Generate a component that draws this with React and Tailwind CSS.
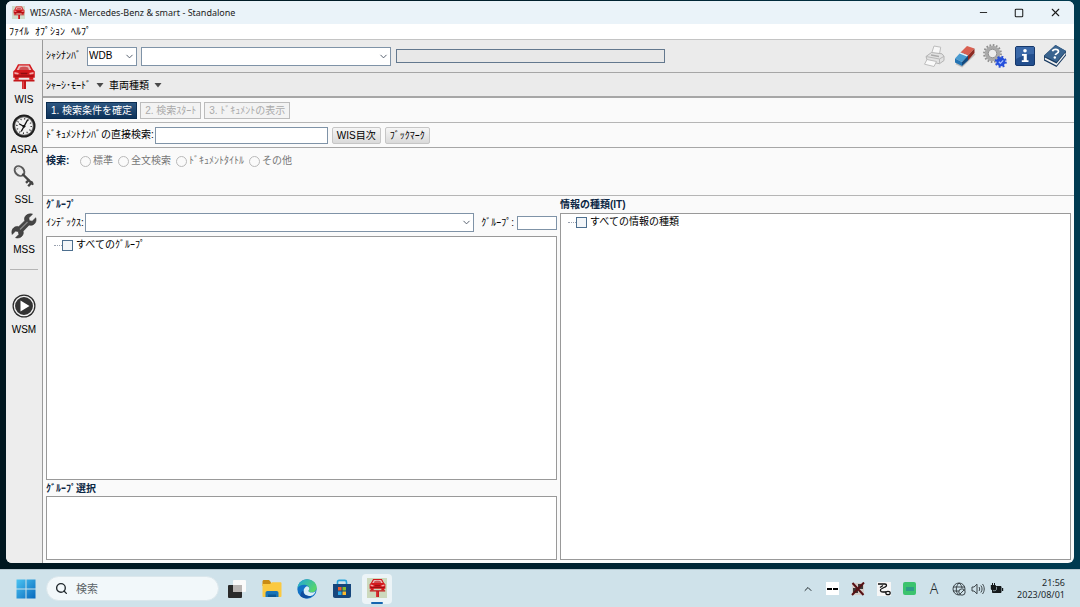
import React, { useState } from "react";
import { ChevronDown, ChevronUp, Search, Minus, Square, X } from "lucide-react";

const CarLiftIcon = ({ className }) => (
  <svg viewBox="0 0 24 26" className={className} aria-hidden="true">
    <path d="M6 1.200h12l3 5.600 1.800 1.700v6.300h-1.500v2h-4v-2H6.700v2h-4v-2H1.200V8.500L3 6.800z" fill="#d3191d" />
    <path d="M7 2.600h10l2.300 4.400H4.700z" fill="#e9b9b9" />
    <path d="M8 4.600c1.500-1 6.500-1 8 0l1 2.400H7z" fill="#d05053" />
    <path d="M2.500 9l4.300.9-.6 1.600-3.700-.4zM21.500 9l-4.300.9.6 1.600 3.700-.4z" fill="#f3a9a9" />
    <path d="M8.300 9.800h7.400l-.7 1.500H9zM2.500 12.600h19v1h-19z" fill="#8f0d10" />
    <path d="M1.500 16.800h21v1.800H14V26h-4v-7.400H1.500z" fill="#c4161a" />
    <path d="M10.600 18.600h1.200V26h-1.200z" fill="#e8585a" />
  </svg>
);

const ClockIcon = () => (
  <svg viewBox="0 0 24 24" className="size-6" aria-hidden="true">
    <circle cx="12" cy="12" r="11.500" fill="#1d1d1d" />
    <circle cx="12" cy="12" r="9.800" fill="#555" />
    <circle cx="12" cy="12" r="8.800" fill="#f1f1f1" />
    <circle cx="12" cy="12" r="7.200" fill="none" stroke="#333" strokeWidth="1.600" strokeDasharray="1 2.770" />
    <path d="M12 12.500L7.500 10M9.500 17L15.500 6" stroke="#111" strokeWidth="1.400" strokeLinecap="round" />
    <circle cx="12" cy="12.300" r="1.400" fill="#111" />
  </svg>
);

const KeyIcon = () => (
  <svg viewBox="0 0 24 24" className="size-6" aria-hidden="true">
    <ellipse cx="7.500" cy="7" rx="4.300" ry="5.400" transform="rotate(-45 7.500 7)" fill="none" stroke="#5a5a5a" strokeWidth="1.900" />
    <path d="M11 10.500l9.500 9.500" stroke="#444" strokeWidth="2.400" strokeLinecap="round" />
    <path d="M20.500 17.500l-4.300 4.700M17.300 15.500l-3.300 3.300" stroke="#444" strokeWidth="2.400" />
    <path d="M4.500 6c.5-1.500 1.600-2.200 3-2.200" stroke="#aaa" strokeWidth="0.800" fill="none" />
  </svg>
);

const WrenchIcon = () => (
  <svg viewBox="0 0 26 26" className="size-[26px]" aria-hidden="true">
    <path
      d="M21.500 1.200l-3.700 3.600.5 2.900 2.900.5 3.600-3.400c.8 3.200-.3 6-3 7.100-1.300.5-2.600.5-3.700.1l-6 6.200c.5 1.500.2 3.200-.9 4.600-1.600 2-4.200 2.600-6.600 1.900l3.300-3.300-.6-2.800-2.800-.6L1.200 21.400c-.8-2.600-.2-5.200 1.800-6.800 1.500-1.200 3.200-1.400 4.700-.9l6.100-6c-.5-1.300-.4-2.800.4-4.100 1.400-2.300 4.300-3.300 7.300-2.400z"
      fill="#454545"
      stroke="#2f2f2f"
      strokeWidth="0.600"
    />
    <path d="M9 16.500l7.500-7.500" stroke="#8a8a8a" strokeWidth="1.200" />
  </svg>
);

const PlayIcon = () => (
  <svg viewBox="0 0 24 24" className="size-6" aria-hidden="true">
    <circle cx="12" cy="12" r="11.500" fill="#2b2b2b" />
    <circle cx="12" cy="12" r="9.600" fill="#333" stroke="#f3f3f3" strokeWidth="1.300" />
    <path d="M8.500 6.500v11l9-5.500z" fill="#fff" />
  </svg>
);

const PrinterIcon = () => (
  <svg viewBox="0 0 24 24" className="size-6" aria-hidden="true">
    <path d="M8.500 9.500L11 2l6.700 1.200L16.500 10z" fill="#f7f7f7" stroke="#bdbdbd" />
    <path d="M3 12.500l5.500-4 10.500 1.300 2 2.500v4.200l-4.500 3.200-12-2.500z" fill="#e2e2e2" stroke="#b3b3b3" />
    <path d="M3 12.500l13.500 2.500 4.500-2.700M16.500 15v4.500" fill="none" stroke="#b8b8b8" />
    <path d="M4 15.500l9.500 2-2.500 5-9.500-2.300z" fill="#fafafa" stroke="#bdbdbd" />
    <path d="M8 11l8 1.500" stroke="#aaa" strokeWidth="1.300" />
  </svg>
);

const EraserIcon = () => (
  <svg viewBox="0 0 24 24" className="size-6" aria-hidden="true">
    <path d="M3 19.500l6 3L22 10" fill="none" stroke="#bbb" strokeWidth="1.500" />
    <path d="M7.500 8.500L14 2l7.500 2.500-6.500 7z" fill="#d95f50" />
    <path d="M15 11.500l6.500-7V9L15 16.500z" fill="#8c2a22" />
    <path d="M2 14.500l5.500-6 7.500 3-6 6.500z" fill="#4a9bd0" />
    <path d="M6.500 9.600l1-1.100 7.500 3-1 1.100z" fill="#eaf3f9" />
    <path d="M2 14.500L9 18v4l-7-3.500z" fill="#2374b4" />
    <path d="M9 18l6-6.500v5L9 22z" fill="#124a80" />
  </svg>
);

const GearsIcon = () => (
  <svg viewBox="0 0 24 24" className="size-6" aria-hidden="true">
    <circle cx="9.500" cy="9.500" r="8.400" fill="none" stroke="#8f8f8f" strokeWidth="2" strokeDasharray="1.650 1.650" />
    <circle cx="9.500" cy="9.500" r="6" fill="none" stroke="#a9a9a9" strokeWidth="3.600" />
    <circle cx="9.500" cy="9.500" r="4.200" fill="#ececec" stroke="#7d7d7d" strokeWidth="0.800" />
    <circle cx="17.800" cy="17.800" r="5" fill="none" stroke="#2a50d8" strokeWidth="2" strokeDasharray="1.960 1.960" />
    <circle cx="17.800" cy="17.800" r="4.500" fill="#2450dc" />
    <path d="M15.800 17.800l1.600 1.500 2.800-3" fill="none" stroke="#a9c0ff" strokeWidth="1.200" />
  </svg>
);

const InfoIcon = () => (
  <svg viewBox="0 0 20 20" className="size-5" aria-hidden="true">
    <rect x="0.500" y="0.500" width="19" height="19" rx="1.500" fill="#234f8e" stroke="#16386b" />
    <path d="M1 1h18v7C12 8 6 10 1 13z" fill="#3a68a8" />
    <circle cx="10" cy="4.800" r="1.800" fill="#fff" />
    <path d="M7 8h4.800v6.300h1.700V16H6.800v-1.700h1.900V9.700H7z" fill="#fff" />
  </svg>
);

const HelpBookIcon = () => (
  <svg viewBox="0 0 24 24" className="size-6" aria-hidden="true">
    <path d="M1 11.500L12.500 1 23 7v4.500L13.500 23 1 16.500z" fill="#183a61" />
    <path d="M1.800 13.500L13.500 19.500 22.500 8.500v2L13.500 21.500 1.800 15.500z" fill="#f0f0f0" />
    <path d="M1 12L12.500 1 23 7 13.500 18z" fill="#3a648f" />
    <path d="M9.500 7.200c.5-2.300 5.700-2.600 6 .1.200 1.900-2.700 2-3.200 3.700" fill="none" stroke="#fff" strokeWidth="1.700" />
    <circle cx="11.800" cy="13.500" r="1.200" fill="#fff" />
  </svg>
);

const WindowsIcon = () => (
  <svg viewBox="0 0 20 20" className="size-5" aria-hidden="true">
    <defs>
      <linearGradient id="winLogo" x1="0" y1="0" x2="1" y2="1">
        <stop offset="0" stopColor="#4cc4f2" />
        <stop offset="1" stopColor="#0668bd" />
      </linearGradient>
    </defs>
    <path d="M.5.5h9v9h-9zM10.500.5h9v9h-9zM.5 10.500h9v9h-9zM10.500 10.500h9v9h-9z" fill="url(#winLogo)" />
  </svg>
);

const TaskViewIcon = () => (
  <svg viewBox="0 0 20 20" className="size-5" aria-hidden="true">
    <rect x="6" y="1" width="13" height="12" rx="1" fill="#fafafa" />
    <rect x="1" y="6" width="14" height="13" rx="1" fill="#2a2a2a" />
    <path d="M6 6h9v7H6z" fill="#b9b5b3" />
  </svg>
);

const FolderIcon = () => (
  <svg viewBox="0 0 20 20" className="size-5" aria-hidden="true">
    <path d="M.5 2.500C.5 1.700 1 1 2 1h5l2 2.200V7H.5z" fill="#c98b14" />
    <path d="M.5 5H8l2-1.800h8.500c.6 0 1 .5 1 1V17c0 .6-.4 1-1 1h-17c-.6 0-1-.4-1-1z" fill="#fbc941" />
    <path d="M3.500 18v-4c0-1.200.8-2 2-2h9c1.200 0 2 .8 2 2v4z" fill="#1974b8" />
    <path d="M6 18v-2.500h8V18z" fill="#0d5691" />
  </svg>
);

const EdgeIcon = () => (
  <svg viewBox="0 0 20 20" className="size-5" aria-hidden="true">
    <defs>
      <linearGradient id="edgeTop" x1="0" y1="0" x2="1" y2="0.600">
        <stop offset="0" stopColor="#1ea5dc" />
        <stop offset="1" stopColor="#58d66a" />
      </linearGradient>
    </defs>
    <circle cx="10" cy="10" r="9.700" fill="#1373c6" />
    <path d="M.4 9C1 3.800 5 .3 10 .3c5.500 0 9.700 3.900 9.700 8.200 0 3-2.200 4.900-5 4.900-2 0-3.300-.7-3.300-1.500 0-.6.9-.9.900-2.400C12.300 7.200 9.700 5.700 7 5.700c-3 0-5.500 1.300-6.600 3.300z" fill="url(#edgeTop)" />
    <path d="M6.500 12.500c0-2.500 1.500-4.600 3.300-5.200 1.500.3 2.500 1.200 2.500 2.300 0 1.400-.9 1.700-.9 2.400 0 .8 1.300 1.500 3.300 1.500 1.600 0 3-.6 4-1.600-.6 2-2 3.500-3.400 4.500-4.500 1.500-8.800-.4-8.800-3.900z" fill="#d9eef6" />
    <path d="M6.500 11.500c-.5 3.600 3.200 6.500 8.400 5.200-3.500 3.200-8.400 3.300-11.500.4 0-3 1-5 3.100-5.600z" fill="#0f4e9f" />
  </svg>
);

const StoreIcon = () => (
  <svg viewBox="0 0 20 20" className="size-5" aria-hidden="true">
    <path d="M5.500 6V3c0-1 .6-1.600 1.600-1.600h5.800c1 0 1.600.6 1.600 1.600v3" fill="none" stroke="#27a4dc" strokeWidth="1.600" />
    <path d="M1 5h18v12c0 1.200-.8 2-2 2H3c-1.200 0-2-.8-2-2z" fill="#16467c" />
    <path d="M6 8h3.500v3.500H6z" fill="#f05a2c" />
    <path d="M10.500 8H14v3.500h-3.500z" fill="#83bb2a" />
    <path d="M6 12.500h3.500V16H6z" fill="#28a8e8" />
    <path d="M10.500 12.500H14V16h-3.500z" fill="#fdbb2d" />
  </svg>
);

const CrossTrayIcon = () => (
  <svg viewBox="0 0 14 14" className="size-[14px]" aria-hidden="true">
    <path d="M1 1h12v12H1z" fill="#d5ccc8" />
    <path d="M2 6h5v5H2zM7 2h5v5H7z" fill="#3c3837" />
    <path d="M1.500 1l11 12M13 .5L1 13" stroke="#561014" strokeWidth="2" />
  </svg>
);

const SnakeTrayIcon = () => (
  <svg viewBox="0 0 14 14" className="size-[14px]" aria-hidden="true">
    <path d="M0 0h14v14H0z" fill="#f6f6f6" />
    <path d="M1 2h7c2 0 2 2.500 0 3L5 6.500c-2.500 1-2 3.500 1 3.500h3M6 3.500l-3 2" fill="none" stroke="#111" strokeWidth="1.300" />
    <ellipse cx="11" cy="11" rx="2.200" ry="1.700" fill="none" stroke="#111" strokeWidth="1.200" />
  </svg>
);

const GlobeIcon = () => (
  <svg viewBox="0 0 14 14" className="size-[14px]" fill="none" stroke="#2c3439" strokeWidth="0.900" aria-hidden="true">
    <circle cx="7" cy="7" r="6" />
    <path d="M1 5h12M1 9h6M7 1C3.500 4 3.500 10 6.500 13M7 1c2 1.500 2.700 3 3 5" />
    <circle cx="10" cy="10" r="3.200" fill="#cfe2ea" />
    <path d="M7.800 12.200l4.400-4.400" />
  </svg>
);

const SpeakerIcon = () => (
  <svg viewBox="0 0 14 14" className="size-[14px]" fill="none" stroke="#2c3439" strokeWidth="0.900" aria-hidden="true">
    <path d="M1 5h2l3-2.800v9.600L3 9H1zM8 5c.9 1 .9 3 0 4M9.800 3.500c1.700 2 1.700 5 0 7M11.500 2c2.300 3 2.300 7 0 10" />
  </svg>
);

const BatteryIcon = () => (
  <svg viewBox="0 0 14 14" className="size-[14px]" aria-hidden="true">
    <path d="M2.500 4.500H11v6H2.500z" fill="#15191b" stroke="#15191b" strokeLinejoin="round" />
    <path d="M12 6h1.200v3H12zM.8 3h5v3.500c0 1-1 1.500-1.700 1.500h-1.600C1.500 8 .8 7.500.8 6.500zM2 1h1v2H2zM4 1h1v2H4z" fill="#15191b" />
    <path d="M6.500 4.800V7c0 1-.8 1.700-1.800 1.700H3" fill="none" stroke="#cfe2ea" strokeWidth="0.600" />
  </svg>
);

const sideItems = [
  { label: "WIS", icon: <CarLiftIcon className="h-[26px] w-6" /> },
  { label: "ASRA", icon: <ClockIcon /> },
  { label: "SSL", icon: <KeyIcon /> },
  { label: "MSS", icon: <WrenchIcon /> },
];

const toolItems = [
  { label: "印刷", icon: <PrinterIcon /> },
  { label: "消去", icon: <EraserIcon /> },
  { label: "設定", icon: <GearsIcon /> },
  { label: "情報", icon: <InfoIcon /> },
  { label: "ヘルプ", icon: <HelpBookIcon /> },
];

const searchModes = ["標準", "全文検索", "ﾄﾞｷｭﾒﾝﾄﾀｲﾄﾙ", "その他"];

const SideButton = ({ label, icon }) => (
  <button type="button" className="flex h-[50px] w-full flex-col items-center">
    <span className="flex h-8 items-center">{icon}</span>
    <span className="leading-4">{label}</span>
  </button>
);

const Combo = ({ id, label, className, children }) => (
  <div className={`relative ${className}`}>
    <select
      id={id}
      aria-label={label}
      className="block h-[19px] w-full appearance-none border border-[#7f93a7] bg-white px-px leading-4 outline-none"
    >
      {children}
    </select>
    <ChevronDown className="pointer-events-none absolute top-1 right-0.5 size-[11px] text-gray-600" />
  </div>
);

const MenuArrow = () => (
  <svg viewBox="0 0 8 5" className="h-[5px] w-2" aria-hidden="true">
    <path d="M.5 0h7L4 4.500z" fill="#4a4a4a" />
  </svg>
);

const TreeRoot = ({ label }) => (
  <label className="flex h-4 items-center pl-[7px]">
    <span className="w-2 border-t border-dotted border-gray-400" />
    <input
      type="checkbox"
      className="mr-[3px] size-[11px] appearance-none border border-[#4d6f8f] bg-[#f3f6f9] checked:bg-[#173a5e]"
    />
    {label}
  </label>
);

const App = () => {
  const [docNumber, setDocNumber] = useState("");
  const [group, setGroup] = useState("");

  return (
    <div
      lang="ja"
      className="flex min-h-screen flex-col bg-linear-to-r from-[#001720] via-[#00202d] to-[#003a50] font-['Liberation_Sans','Noto_Sans_CJK_JP',sans-serif] text-[10px] leading-4 text-black"
    >
      <main className="mx-1.5 mt-px mb-1.5 flex flex-1 flex-col overflow-hidden rounded-md bg-[#fafafa]">
        <header className="flex h-[23px] items-center bg-[#eaf3f9] pr-px pl-1.5 font-['Noto_Sans',sans-serif] text-[#1b1b1b]">
          <span className="mr-[5px] flex size-[13px] justify-center bg-[#cfdccb]">
            <CarLiftIcon className="h-[13px] w-3" />
          </span>
          <h1 className="flex-1 text-[9px]">WIS/ASRA - Mercedes-Benz &amp; smart - Standalone</h1>
          <button type="button" aria-label="最小化" className="flex w-9 justify-center">
            <Minus className="size-[11px]" />
          </button>
          <button type="button" aria-label="最大化" className="flex w-9 justify-center">
            <Square className="size-[10px]" strokeWidth={2.5} />
          </button>
          <button type="button" aria-label="閉じる" className="flex w-9 justify-center">
            <X className="size-[13px]" />
          </button>
        </header>

        <nav className="flex h-4 items-center gap-1.5 border-b border-[#c4c4c4] bg-white pl-[3px]">
          <button type="button">ﾌｧｲﾙ</button>
          <button type="button">ｵﾌﾟｼｮﾝ</button>
          <button type="button">ﾍﾙﾌﾟ</button>
        </nav>

        <div className="flex flex-1">
          <aside className="w-[37px] shrink-0 border-r border-[#9a9a9a] bg-[#ededed] pt-5">
            {sideItems.map((item) => (
              <SideButton key={item.label} {...item} />
            ))}
            <hr className="mx-1 mt-[9px] mb-5 border-[#b5b5b5]" />
            <SideButton label="WSM" icon={<PlayIcon />} />
          </aside>

          <div className="flex min-w-0 flex-1 flex-col">
            <div className="flex h-[33px] items-center border-b border-[#a6a6a6] bg-[#ebebeb] pr-[7px] pl-[3px]">
              <label htmlFor="chassis" className="w-[41px]">ｼｬｼﾅﾝﾊﾞ</label>
              <Combo id="chassis" className="mr-1 w-[50px]">
                <option>WDB</option>
              </Combo>
              <Combo id="chassis-number" label="ｼｬｼﾅﾝﾊﾞ" className="mr-[5px] w-[250px]" />
              <input readOnly aria-label="車両" className="h-[14px] w-[269px] border border-[#63788e] bg-[#e8e8e8]" />
              <div className="ml-auto flex gap-1.5">
                {toolItems.map((tool) => (
                  <button key={tool.label} type="button" aria-label={tool.label} className="flex size-6 items-center justify-center">
                    {tool.icon}
                  </button>
                ))}
              </div>
            </div>

            <div className="flex h-[25px] items-center gap-[5px] border-b-2 border-[#a6a6a6] bg-[#ebebeb] pt-0.5 pl-[3px]">
              <button type="button" className="flex items-center gap-[5px]">
                ｼｬｰｼ･ﾓｰﾄﾞ <MenuArrow />
              </button>
              <button type="button" className="flex items-center gap-[5px]">
                車両種類 <MenuArrow />
              </button>
            </div>

            <div className="flex h-[25px] items-center gap-[3px] border-b border-[#b5b5b5] pt-px pl-[3px]">
              <button type="button" className="h-[17px] border border-[#0a2c50] bg-linear-to-b from-[#2d5680] to-[#0d325a] px-1 leading-[15px] text-white">
                1. 検索条件を確定
              </button>
              <button type="button" disabled className="h-[17px] border border-[#bcbcbc] bg-[#f3f3f3] px-1 leading-[15px] text-[#aaa]">
                2. 検索ｽﾀｰﾄ
              </button>
              <button type="button" disabled className="h-[17px] border border-[#bcbcbc] bg-[#f3f3f3] px-1 leading-[15px] text-[#aaa]">
                3. ﾄﾞｷｭﾒﾝﾄの表示
              </button>
            </div>

            <div className="flex h-[25px] items-center border-b border-[#a6a6a6] pl-[3px]">
              <label htmlFor="doc" className="mr-px whitespace-nowrap">ﾄﾞｷｭﾒﾝﾄﾅﾝﾊﾞの直接検索:</label>
              <input
                id="doc"
                value={docNumber}
                onChange={(e) => setDocNumber(e.target.value)}
                className="mr-1 h-[17px] w-[173px] border border-[#7f93a7] bg-white px-1 outline-none"
              />
              <button type="button" className="mr-1 h-[17px] rounded-xs border border-[#c6c6c6] bg-linear-to-b from-[#f6f6f6] to-[#dadada] px-1 leading-[15px]">
                WIS目次
              </button>
              <button type="button" className="h-[17px] rounded-xs border border-[#c6c6c6] bg-linear-to-b from-[#f6f6f6] to-[#dadada] px-1 leading-[15px]">
                ﾌﾞｯｸﾏｰｸ
              </button>
            </div>

            <fieldset disabled className="flex h-12 items-start border-b border-[#b5b5b5] pt-[5px] pl-[3px] text-[#777]">
              <legend className="float-left w-[34px] font-bold text-[#0c2744]">検索:</legend>
              <div className="flex gap-[5px]">
                {searchModes.map((mode) => (
                  <label key={mode} className="flex items-center gap-0.5">
                    <input type="radio" name="mode" className="size-[11px] appearance-none rounded-full border border-[#b9b9b9] bg-[#fafafa]" />
                    {mode}
                  </label>
                ))}
              </div>
            </fieldset>

            <div className="flex flex-1 gap-[3px] pr-[3px] pb-[3px] pl-[3px]">
              <section className="flex min-w-0 flex-1 flex-col">
                <h2 className="h-[17px] pt-px font-bold text-[#0c2744]">ｸﾞﾙｰﾌﾟ</h2>
                <div className="mb-1 flex items-center">
                  <label htmlFor="index" className="w-[39px] whitespace-nowrap">ｲﾝﾃﾞｯｸｽ:</label>
                  <Combo id="index" className="min-w-0 flex-1" />
                  <label htmlFor="group" className="mr-[3px] ml-[7px]">ｸﾞﾙｰﾌﾟ:</label>
                  <input
                    id="group"
                    value={group}
                    onChange={(e) => setGroup(e.target.value)}
                    className="h-[14px] w-10 border border-[#7f93a7] bg-white px-1 outline-none"
                  />
                </div>
                <div className="flex-1 border border-[#999] bg-white">
                  <TreeRoot label="すべてのｸﾞﾙｰﾌﾟ" />
                </div>
                <h2 className="h-4 pt-px font-bold text-[#0c2744]">ｸﾞﾙｰﾌﾟ選択</h2>
                <div className="h-16 border border-[#999] bg-white" />
              </section>

              <section className="flex min-w-0 flex-1 flex-col">
                <h2 className="h-[17px] pt-px font-bold text-[#0c2744]">情報の種類(IT)</h2>
                <div className="flex-1 border border-[#999] bg-white">
                  <TreeRoot label="すべての情報の種類" />
                </div>
              </section>
            </div>
          </div>
        </div>
      </main>

      <footer className="flex h-[38px] items-center border-t border-[#b5c6cf] bg-[#cfe2ea] pr-[15px] pl-4 font-['Noto_Sans','Noto_Sans_CJK_JP',sans-serif] text-[#20282c]">
        <button type="button" aria-label="スタート"><WindowsIcon /></button>
        <label className="ml-2.5 flex h-[25px] w-[173px] items-center gap-2 rounded-full border border-[#dbe7ec] bg-[#f2f8fa] pl-2">
          <Search className="size-[13px] shrink-0" strokeWidth={2.5} />
          <input type="search" placeholder="検索" aria-label="検索" className="w-full min-w-0 text-[11px] outline-none placeholder:text-[#5b6468]" />
        </label>
        <div className="flex items-center gap-[15px] pl-2">
          <button type="button" aria-label="タスク ビュー"><TaskViewIcon /></button>
          <button type="button" aria-label="エクスプローラー"><FolderIcon /></button>
          <button type="button" aria-label="Edge"><EdgeIcon /></button>
          <button type="button" aria-label="Store"><StoreIcon /></button>
        </div>
        <button type="button" aria-label="WIS" className="ml-2.5 flex h-[30px] w-[30px] flex-col items-center rounded-sm bg-[#ecf4f7] pt-1">
          <span className="flex size-5 justify-center bg-[#ccd9bd]">
            <CarLiftIcon className="size-[19px]" />
          </span>
          <span className="mt-1 h-0.5 w-3 rounded-full bg-[#1566b0]" />
        </button>

        <div className="ml-auto flex items-center">
          <ChevronUp className="mr-3 size-3" />
          <div className="flex items-center gap-3">
            <span className="flex size-[13px] items-center justify-center gap-px bg-white">
              <span className="h-0.5 w-[5px] bg-black" />
              <span className="h-0.5 w-[5px] bg-black" />
            </span>
            <CrossTrayIcon />
            <SnakeTrayIcon />
            <span className="flex size-[13px] items-center justify-center rounded-xs bg-[#3cc36e]">
              <span className="h-1 w-2 bg-[#2f9c86]" />
            </span>
            <span className="w-3 text-center text-sm font-light">A</span>
            <div className="flex items-center gap-[5px]">
              <GlobeIcon />
              <SpeakerIcon />
              <BatteryIcon />
            </div>
          </div>
          <div className="ml-[13px] text-right text-[9px] leading-3">
            <div>21:56</div>
            <div>2023/08/01</div>
          </div>
        </div>
      </footer>
    </div>
  );
};

export default App;
